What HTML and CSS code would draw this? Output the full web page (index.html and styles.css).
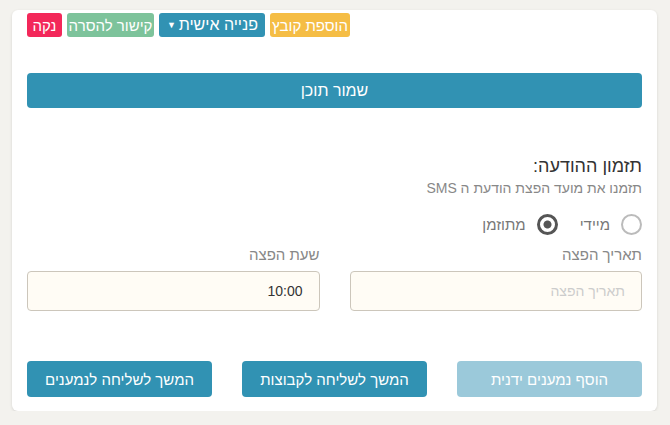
FILE: index.html
```html
<!DOCTYPE html>
<html lang="he" dir="rtl">

<head>
  <meta charset="UTF-8">
  <meta name="viewport" content="width=device-width, initial-scale=1.0">
  <title>תזמון הודעה</title>

  <link rel="stylesheet" href="styles.css">
</head>

<body>
  <main class="card">
    <div class="toolbar">
      <button type="button" class="tool tool-yellow">הוספת קובץ</button>
      <span class="tool tool-blue tool-select">פנייה אישית <span class="caret">▼</span></span>
      <button type="button" class="tool tool-green">קישור להסרה</button>
      <button type="button" class="tool tool-red">נקה</button>
    </div>

    <button type="button" class="save">שמור תוכן</button>

    <h3 class="title">תזמון ההודעה:</h3>
    <p class="subtitle">תזמנו את מועד הפצת הודעת ה SMS</p>

    <div class="radios">
      <label class="radio"><span class="circle"></span>מיידי</label>
      <label class="radio"><span class="circle checked"></span>מתוזמן</label>
    </div>

    <div class="fields">
      <div class="field">
        <label for="date">תאריך הפצה</label>
        <input id="date" type="text" placeholder="תאריך הפצה">
      </div>
      <div class="field">
        <label for="time">שעת הפצה</label>
        <input id="time" type="text" value="10:00">
      </div>
    </div>

    <div class="actions">
      <button type="button" class="action action-light">הוסף נמענים ידנית</button>
      <button type="button" class="action">המשך לשליחה לקבוצות</button>
      <button type="button" class="action">המשך לשליחה לנמענים</button>
    </div>
  </main>
</body>

</html>
```

FILE: styles.css
```css
body {
  margin: 0;
  background-color: #f3f2ee;
  font-family: "Liberation Sans", Arial, sans-serif;
  color: #333;
}

.card {
  width: 615px;
  margin: 10px 13px 0 0;
  padding: 3px 15px 14px 15px;
  background-color: #fff;
  border-radius: 6px;
  box-shadow: 0 1px 3px rgba(0, 0, 0, 0.12);
}

.toolbar {
  display: flex;
  justify-content: flex-end;
  gap: 5px;
  height: 24px;
}

.tool {
  display: flex;
  align-items: center;
  justify-content: center;
  height: 24px;
  padding: 0;
  border: 0;
  border-radius: 3px;
  color: #fff;
  font-family: "Liberation Sans", Arial, sans-serif;
  font-size: 15px;
  box-sizing: border-box;
}

.tool-yellow {
  width: 80px;
  background-color: #f5bd45;
}

.tool-blue {
  background-color: #3192b3;
}

.tool-green {
  width: 87px;
  background-color: #7dc39b;
}

.tool-red {
  width: 35px;
  background-color: #f3285a;
}

.tool-select {
  width: 106px;
  padding: 0 7px 0 8px;
  justify-content: space-between;
  font-size: 16px;
}

.caret {
  font-size: 9px;
}

.save {
  display: block;
  width: 100%;
  height: 35px;
  margin-top: 36px;
  border: 0;
  border-radius: 4px;
  background-color: #3192b3;
  color: #fff;
  font-family: "Liberation Sans", Arial, sans-serif;
  font-size: 16px;
}

.title {
  margin: 48px 0 0 0;
  font-size: 18px;
  font-weight: normal;
  color: #333;
}

.subtitle {
  margin: 3px 0 0 0;
  font-size: 14px;
  color: #888;
}

.radios {
  display: flex;
  gap: 22px;
  margin-top: 18px;
}

.radio {
  display: flex;
  align-items: center;
  gap: 11px;
  font-size: 15px;
  color: #777;
}

.circle {
  width: 17px;
  height: 17px;
  border: 2px solid #bbb;
  border-radius: 50%;
  box-sizing: content-box;
}

.circle.checked {
  width: 15px;
  height: 15px;
  border: 3px solid #555;
  background: radial-gradient(circle, #555 0 3.5px, #fff 4.5px);
}

.fields {
  display: grid;
  grid-template-columns: 1fr 1fr;
  gap: 30px;
  margin-top: 11px;
}

.field label {
  display: block;
  font-size: 15px;
  color: #888;
  margin-bottom: 8px;
}

.field input {
  display: block;
  width: 100%;
  height: 40px;
  box-sizing: border-box;
  padding: 0 16px;
  border: 1px solid #ccc6bb;
  border-radius: 4px;
  background-color: #fffcf5;
  font-family: "Liberation Sans", Arial, sans-serif;
  font-size: 14px;
  color: #333;
}

.field input::placeholder {
  color: #ccc;
}

.actions {
  display: grid;
  grid-template-columns: 1fr 1fr 1fr;
  gap: 30px;
  margin-top: 50px;
}

.action {
  height: 36px;
  border: 0;
  border-radius: 4px;
  background-color: #3192b3;
  color: #fff;
  font-family: "Liberation Sans", Arial, sans-serif;
  font-size: 15px;
}

.action-light {
  background-color: #9bc9da;
}
```
